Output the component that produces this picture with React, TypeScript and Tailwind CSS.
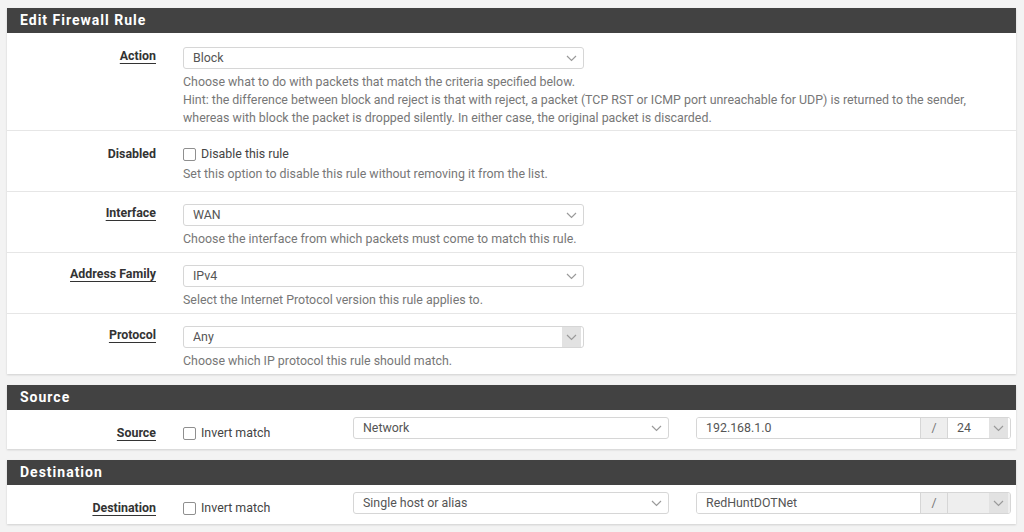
import React from "react";

const font = { fontFamily: "Roboto, 'Liberation Sans', sans-serif" };

function Chevron() {
  return (
    <svg width="11" height="7" viewBox="0 0 11 7">
      <path d="M1 1l4.5 4.5L10 1" stroke="#9a9a9a" fill="none" strokeWidth="1.2" />
    </svg>
  );
}

function Select({
  value,
  className,
  shaded = false,
  disabled = false,
}: {
  value: string;
  className: string;
  shaded?: boolean;
  disabled?: boolean;
}) {
  return (
    <div
      className={`flex items-center h-[22px] border border-[#d6d6d6] rounded-[3px] text-[12.4px] text-[#555] pl-[9px] ${
        disabled ? "bg-[#eeeeee]" : "bg-white"
      } ${className}`}
    >
      <span className="flex-1 truncate">{value}</span>
      <span
        className={`w-[19px] h-full flex items-center justify-center mr-[2px] ${
          shaded ? "bg-[#e2e2e2]" : ""
        }`}
      >
        <Chevron />
      </span>
    </div>
  );
}

function Checkbox({ text, tall = false }: { text: string; tall?: boolean }) {
  return (
    <div className={`flex items-center text-[12.4px] text-[#444] ${tall ? "h-[22px]" : "h-[18px]"}`}>
      <span className="w-[13px] h-[13px] border border-[#8f8f8f] rounded-[2px] bg-white mr-[5px]" />
      {text}
    </div>
  );
}

function Label({ text, underline = true }: { text: string; underline?: boolean }) {
  return (
    <div className="w-[149px] shrink-0 text-right text-[12.4px] font-bold text-[#333] leading-[18px]">
      <span className={underline ? "underline underline-offset-[3px]" : ""}>{text}</span>
    </div>
  );
}

function Help({ lines, tight = false }: { lines: string[]; tight?: boolean }) {
  return (
    <div className={`text-[12.4px] leading-[18px] text-[#777] ${tight ? "" : "mt-[4px]"}`}>
      {lines.map((l) => (
        <div key={l} className="whitespace-nowrap">
          {l}
        </div>
      ))}
    </div>
  );
}

function Row({
  label,
  underline = true,
  first = false,
  checkbox = false,
  children,
  help,
}: {
  label: string;
  underline?: boolean;
  first?: boolean;
  checkbox?: boolean;
  children: React.ReactNode;
  help: string[];
}) {
  const spacing = first
    ? "pt-[14px] pb-[3px]"
    : checkbox
      ? "pt-[12px] pb-[8px] border-t border-[#e6e6e6]"
      : "pt-[12px] pb-[4px] border-t border-[#e6e6e6]";
  return (
    <div className={`flex ${spacing}`}>
      <div className={checkbox ? "mt-[2px]" : ""}>
        <Label text={label} underline={underline} />
      </div>
      <div className="ml-[27px] flex flex-col">
        {children}
        <Help lines={help} tight={checkbox} />
      </div>
    </div>
  );
}

function Heading({ title }: { title: string }) {
  return (
    <div className="h-[25px] bg-[#424242] pl-[13px] text-[14px] font-bold tracking-[1px] text-white leading-[25px]">
      {title}
    </div>
  );
}

function AddressRow({
  label,
  type,
  address,
  mask,
}: {
  label: string;
  type: string;
  address: string;
  mask: string;
}) {
  return (
    <div className="flex items-start pt-[7px] pb-[7px]">
      <div className="mt-[7px]">
        <Label text={label} />
      </div>
      <div className="ml-[27px] mt-[7px] w-[170px]">
        <Checkbox text="Invert match" />
      </div>
      <Select value={type} className="w-[316px]" />
      <div className="ml-[27px] flex h-[22px] w-[315px] border border-[#d6d6d6] rounded-[3px] text-[12.4px] text-[#555] overflow-hidden">
        <div className="flex-1 flex items-center pl-[9px] bg-white">{address}</div>
        <div className="w-[28px] flex items-center justify-center bg-[#eeeeee] border-x border-[#d6d6d6] text-[#777]">
          /
        </div>
        <div
          className={`w-[62px] flex items-center pl-[9px] ${mask ? "bg-white" : "bg-[#eeeeee]"}`}
        >
          <span className="flex-1">{mask}</span>
          <span className="w-[19px] h-full flex items-center justify-center mr-[2px] bg-[#e2e2e2]">
            <Chevron />
          </span>
        </div>
      </div>
    </div>
  );
}

export default function App() {
  return (
    <div className="min-h-screen bg-[#f3f3f3] pt-[8px] pl-[7px]" style={font}>
      <div className="w-[1009px]">
        {/* ── Edit Firewall Rule ── */}
        <div className="bg-white shadow-[0_1px_2px_rgba(0,0,0,0.15)]">
          <Heading title="Edit Firewall Rule" />
          <Row
            first
            label="Action"
            help={[
              "Choose what to do with packets that match the criteria specified below.",
              "Hint: the difference between block and reject is that with reject, a packet (TCP RST or ICMP port unreachable for UDP) is returned to the sender,",
              "whereas with block the packet is dropped silently. In either case, the original packet is discarded.",
            ]}
          >
            <Select value="Block" className="w-[401px]" />
          </Row>
          <Row
            checkbox
            label="Disabled"
            underline={false}
            help={["Set this option to disable this rule without removing it from the list."]}
          >
            <Checkbox tall text="Disable this rule" />
          </Row>
          <Row label="Interface" help={["Choose the interface from which packets must come to match this rule."]}>
            <Select value="WAN" className="w-[401px]" />
          </Row>
          <Row label="Address Family" help={["Select the Internet Protocol version this rule applies to."]}>
            <Select value="IPv4" className="w-[401px]" />
          </Row>
          <Row label="Protocol" help={["Choose which IP protocol this rule should match."]}>
            <Select value="Any" className="w-[401px]" shaded />
          </Row>
        </div>

        {/* ── Source ── */}
        <div className="mt-[11px] bg-white shadow-[0_1px_2px_rgba(0,0,0,0.15)]">
          <Heading title="Source" />
          <AddressRow label="Source" type="Network" address="192.168.1.0" mask="24" />
        </div>

        {/* ── Destination ── */}
        <div className="mt-[11px] bg-white shadow-[0_1px_2px_rgba(0,0,0,0.15)]">
          <Heading title="Destination" />
          <AddressRow label="Destination" type="Single host or alias" address="RedHuntDOTNet" mask="" />
        </div>
      </div>
    </div>
  );
}
